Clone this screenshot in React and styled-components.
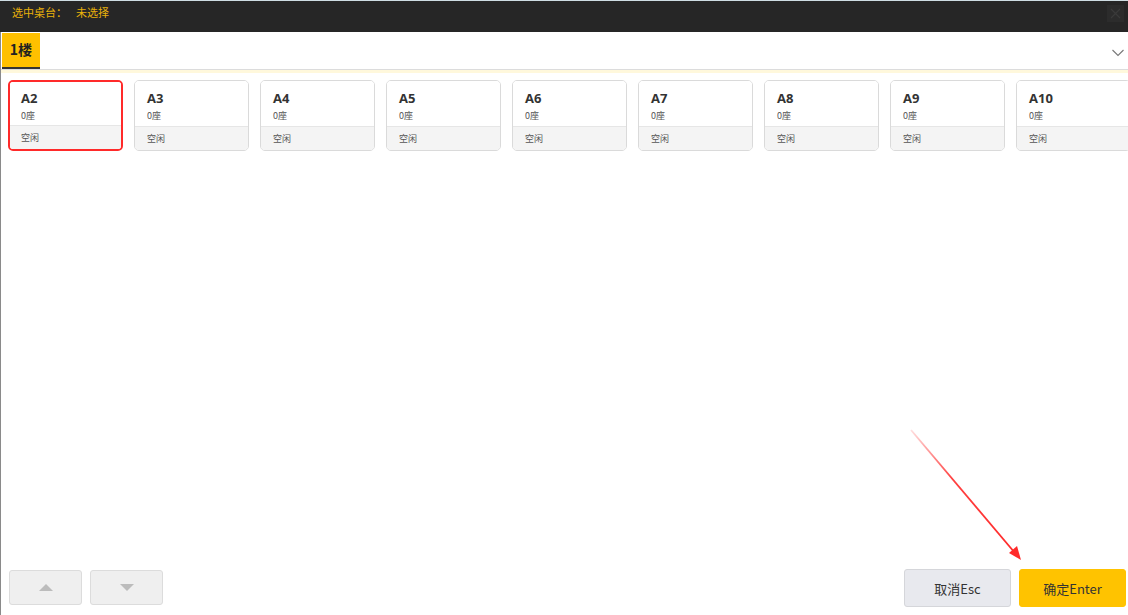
import React from "react";
import styled, { createGlobalStyle } from "styled-components";

const Global = createGlobalStyle`
  html, body { margin: 0; padding: 0; background: #fff; }
  body { font-family: "Noto Sans CJK SC", "Noto Sans", sans-serif; }
  #root { height: 615px; }
`;

const Page = styled.div`
  position: relative;
  width: 1128px;
  height: 615px;
  display: flex;
  flex-direction: column;
  overflow: hidden;
  background: #fff;
`;

const TopBar = styled.div`
  height: 32px;
  flex: none;
  box-sizing: border-box;
  background: #262626;
  border-top: 1px solid #cfdde3;
  display: flex;
  align-items: flex-start;
  padding: 3px 12px 0;
  font-size: 11px;
  line-height: 16px;
  color: #e8b10a;
`;

const TopLabel = styled.span`
  width: 64px;
`;

const CloseBox = styled.div`
  margin-left: auto;
  margin-right: -8px;
  margin-top: 1px;
  width: 17px;
  height: 17px;
  background: #2c2c2c;
  display: flex;
  align-items: center;
  justify-content: center;
`;

const Main = styled.div`
  flex: 1;
  display: flex;
  flex-direction: column;
  border-left: 1px solid #8a8a8a;
  min-height: 0;
`;

const TabRow = styled.div`
  height: 38px;
  flex: none;
  box-sizing: border-box;
  display: flex;
  align-items: stretch;
  padding-left: 1px;
  padding-top: 1px;
  border-bottom: 1px solid #dcdcdc;
`;

const Tab = styled.div`
  width: 38px;
  background: #ffc000;
  border-bottom: 2px solid #333;
  display: flex;
  align-items: center;
  justify-content: center;
  font-size: 14px;
  font-weight: 700;
  color: #222;
  box-sizing: border-box;
  padding-bottom: 2px;
`;

const Chevron = styled.div`
  margin-left: auto;
  width: 16px;
  display: flex;
  align-items: center;
  justify-content: flex-start;
  padding-top: 4px;
`;

const Strip = styled.div`
  height: 3px;
  background: #fff8dc;
  flex: none;
`;

const CardRow = styled.div`
  display: flex;
  gap: 11px;
  padding: 7px 0 0 7px;
  overflow: hidden;
`;

const Card = styled.div`
  flex: none;
  width: 115px;
  height: 71px;
  box-sizing: border-box;
  border: ${(p) => (p.$selected ? "2px solid #ff2a2a" : "1px solid #dadada")};
  border-radius: 5px;
  display: flex;
  flex-direction: column;
  overflow: hidden;
`;

const CardTop = styled.div`
  flex: 1;
  background: #fff;
  padding: ${(p) => (p.$selected ? "9px 0 0 11px" : "10px 0 0 12px")};
  display: flex;
  flex-direction: column;
`;

const CardName = styled.div`
  font-family: "Open Sans", "Noto Sans CJK SC", sans-serif;
  font-size: 13px;
  font-weight: 700;
  color: #333;
  line-height: 14px;
`;

const CardSeats = styled.div`
  font-size: 9px;
  color: #555;
  margin-top: 5px;
  line-height: 12px;
`;

const CardBottom = styled.div`
  height: 24px;
  background: #f4f4f4;
  border-top: 1px solid #e6e6e6;
  font-size: 9px;
  color: #555;
  display: flex;
  align-items: center;
  padding-left: ${(p) => (p.$selected ? "11px" : "12px")};
  box-sizing: border-box;
`;

const Spacer = styled.div`
  flex: 1;
`;

const Footer = styled.div`
  display: flex;
  align-items: center;
  padding: 0 2px 8px 8px;
  gap: 8px;
`;

const NavButton = styled.div`
  width: 73px;
  height: 35px;
  box-sizing: border-box;
  background: #efefef;
  border: 1px solid #dcdcdc;
  border-radius: 3px;
  display: flex;
  align-items: center;
  justify-content: center;
  margin-top: 1px;
`;

const ActionButton = styled.div`
  width: 107px;
  height: 38px;
  box-sizing: border-box;
  border-radius: 3px;
  display: flex;
  align-items: center;
  justify-content: center;
  font-size: 13px;
  color: #333;
  background: ${(p) => (p.$primary ? "#ffc300" : "#e8e9ee")};
  border: 1px solid ${(p) => (p.$primary ? "#ffc300" : "#d5d6da")};
  margin-top: 3px;
`;

const Push = styled.div`
  margin-left: auto;
`;

const ArrowSvg = styled.svg`
  position: absolute;
  left: 905px;
  top: 425px;
  pointer-events: none;
`;

const tables = ["A2", "A3", "A4", "A5", "A6", "A7", "A8", "A9", "A10"];

export default function App() {
  return (
    <Page>
      <Global />
      <TopBar>
        <TopLabel>选中桌台：</TopLabel>
        <span>未选择</span>
        <CloseBox>
          <svg width="13" height="13" viewBox="0 0 13 13">
            <path d="M2 2L11 11M11 2L2 11" stroke="#3a3a3a" strokeWidth="1.2" />
          </svg>
        </CloseBox>
      </TopBar>
      <Main>
        <TabRow>
          <Tab>1楼</Tab>
          <Chevron>
            <svg width="12" height="8" viewBox="0 0 12 8">
              <path d="M0.5 1L6 6.5L11.5 1" fill="none" stroke="#777" strokeWidth="1.1" />
            </svg>
          </Chevron>
        </TabRow>
        <Strip />
        <CardRow>
          {tables.map((t, i) => (
            <Card key={t} $selected={i === 0}>
              <CardTop $selected={i === 0}>
                <CardName>{t}</CardName>
                <CardSeats>0座</CardSeats>
              </CardTop>
              <CardBottom $selected={i === 0}>空闲</CardBottom>
            </Card>
          ))}
        </CardRow>
        <Spacer />
        <Footer>
          <NavButton>
            <svg width="14" height="7" viewBox="0 0 14 7">
              <path d="M0 7L7 0L14 7Z" fill="#bcbcbc" />
            </svg>
          </NavButton>
          <NavButton>
            <svg width="14" height="7" viewBox="0 0 14 7">
              <path d="M0 0L14 0L7 7Z" fill="#bcbcbc" />
            </svg>
          </NavButton>
          <Push />
          <ActionButton>取消Esc</ActionButton>
          <ActionButton $primary>确定Enter</ActionButton>
        </Footer>
      </Main>
      <ArrowSvg width="125" height="140" viewBox="0 0 125 140">
        <defs>
          <linearGradient id="g" x1="0" y1="0" x2="1" y2="1">
            <stop offset="0" stopColor="#ff2a2a" stopOpacity="0.15" />
            <stop offset="0.4" stopColor="#ff2a2a" stopOpacity="0.9" />
            <stop offset="1" stopColor="#ff2a2a" />
          </linearGradient>
        </defs>
        <path d="M6 5L110 128" stroke="url(#g)" strokeWidth="1.8" />
        <path d="M116 135L104 128L112 121Z" fill="#ff2a2a" />
      </ArrowSvg>
    </Page>
  );
}
